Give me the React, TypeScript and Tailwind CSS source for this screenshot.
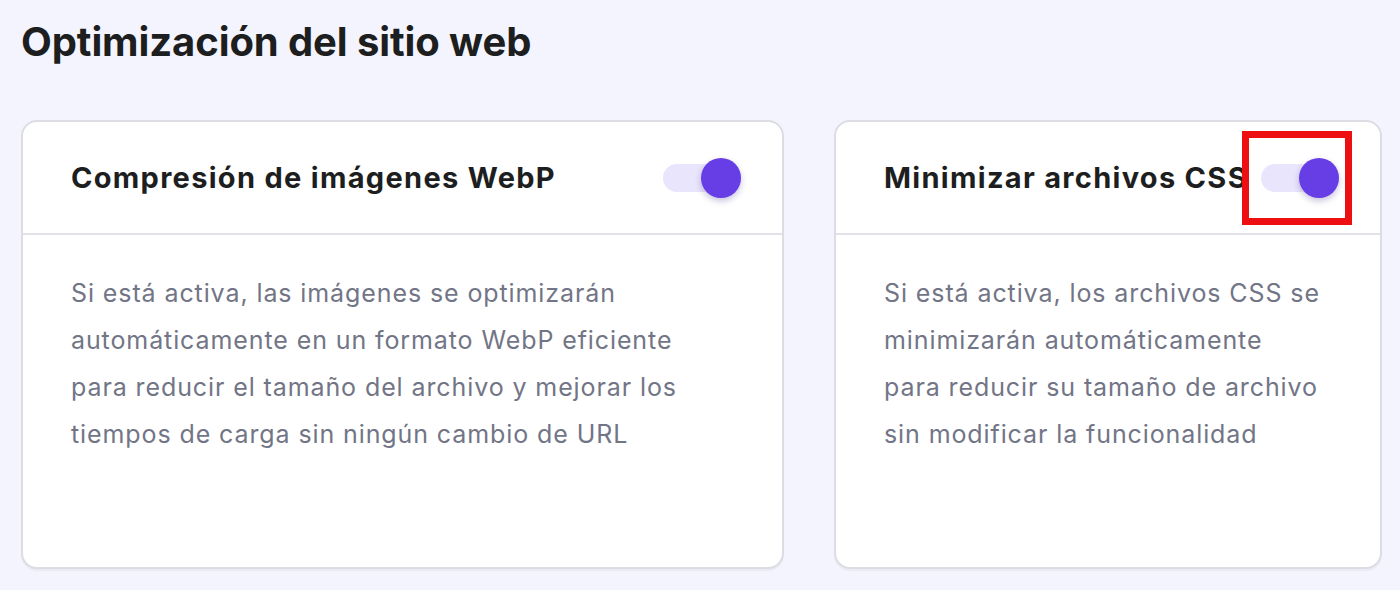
import type { ReactNode } from 'react';

const font = { fontFamily: 'Inter, "Noto Sans", sans-serif' };

const Toggle = ({ highlighted = false }: { highlighted?: boolean }) => (
  <div className="relative flex items-center">
    <div className="relative w-[78px] h-[40px] flex items-center">
      <div className="w-full h-[28px] rounded-full bg-[#e9e5fc]" />
      <div className="absolute right-0 top-0 w-[40px] h-[40px] rounded-full bg-[#673de6] shadow-[0_3px_6px_rgba(40,20,120,0.25)]" />
    </div>
    {highlighted && (
      <div className="absolute -left-[19px] -top-[27px] w-[110px] h-[94px] border-[7px] border-[#ee0f12]" />
    )}
  </div>
);

const Card = ({
  title,
  lines,
  highlighted,
}: {
  title: string;
  lines: ReactNode[];
  highlighted?: boolean;
}) => (
  <div className="bg-white rounded-[16px] border-2 border-[#dcdce3] shadow-[0_2px_0_rgba(0,0,0,0.04)] h-[449px] flex flex-col">
    <div className="h-[113px] flex items-center justify-between pl-[48px] pr-[41px] border-b-2 border-[#e1e1e7]">
      <h3 className="text-[29px] font-bold text-[#1d1e20] tracking-[1.3px]">{title}</h3>
      <Toggle highlighted={highlighted} />
    </div>
    <div className="pl-[48px] pt-[35px] text-[25px] leading-[47px] text-[#727586] tracking-[0.9px]">
      {lines.map((l, i) => (
        <div key={i}>{l}</div>
      ))}
    </div>
  </div>
);

export default function App() {
  return (
    <div className="min-h-screen w-[1400px] h-[590px] bg-[#f4f4fe] pl-[21px] pt-[18px]" style={font}>
      <h2 className="text-[40px] font-bold text-[#1d1e20] leading-[48px] tracking-[-0.1px]">
        Optimización del sitio web
      </h2>
      <div className="grid grid-cols-[763px_548px] gap-[50px] mt-[54px]">
        <Card
          title="Compresión de imágenes WebP"
          lines={[
            'Si está activa, las imágenes se optimizarán',
            'automáticamente en un formato WebP eficiente',
            'para reducir el tamaño del archivo y mejorar los',
            'tiempos de carga sin ningún cambio de URL',
          ]}
        />
        <Card
          title="Minimizar archivos CSS"
          highlighted
          lines={[
            'Si está activa, los archivos CSS se',
            'minimizarán automáticamente',
            'para reducir su tamaño de archivo',
            'sin modificar la funcionalidad',
          ]}
        />
      </div>
    </div>
  );
}
